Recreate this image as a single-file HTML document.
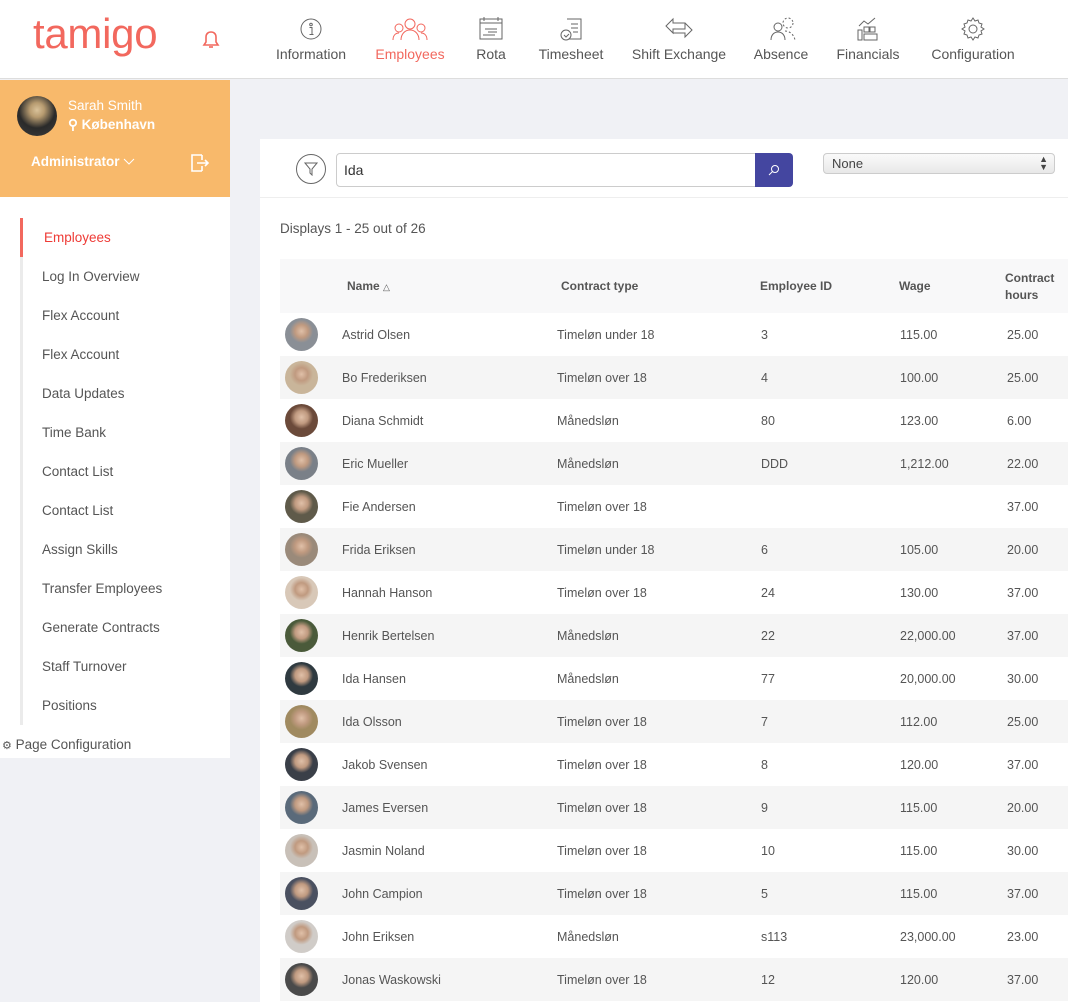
<!DOCTYPE html>
<html><head><meta charset="utf-8">
<style>
*{margin:0;padding:0;box-sizing:border-box}
body{width:1068px;height:1002px;overflow:hidden;background:#f0f1f5;font-family:"Liberation Sans",sans-serif;color:#555;position:relative}
.top{position:absolute;left:0;top:0;width:1068px;height:79px;background:#fff;border-bottom:1px solid #ddd}
.logo{position:absolute;left:33px;top:10px;font-size:42px;color:#f2685e;letter-spacing:-0.3px;font-weight:normal}
.nav{position:absolute;top:0;height:79px;text-align:center;font-size:14px;color:#555}
.nav svg{position:absolute;top:17px;left:50%;margin-left:-12px}
.nav span{position:absolute;top:46px;left:50%;transform:translateX(-50%);white-space:nowrap}
.side{position:absolute;left:0;top:80px;width:230px;height:678px;background:#fff}
.prof{position:absolute;left:0;top:0;width:230px;height:117px;background:#f8b96b;color:#fff}
.sitem{position:absolute;left:42px;font-size:13.5px;color:#555}
.panel{position:absolute;left:260px;top:139px;width:808px;height:863px;background:#fff}
.row{position:absolute;left:20px;width:788px;height:43px;font-size:12.5px;color:#555}
.row div{position:absolute;top:15px;white-space:nowrap}
.av{position:absolute;left:5px;top:5px;width:33px;height:33px;border-radius:50%}
.hd{position:absolute;font-size:12px;font-weight:bold;color:#555}
</style></head><body>
<div class="top">
 <div class="logo">tamigo</div>
 <svg style="position:absolute;left:202px;top:30px" width="18" height="20" viewBox="0 0 18 20"><path d="M9 2c-3 0-5 2-5 5v5l-2 3h14l-2-3V7c0-3-2-5-5-5z" fill="none" stroke="#f2685e" stroke-width="1.6"/><path d="M7 17h4" stroke="#f2685e" stroke-width="1.6"/></svg>
 <div class="nav" style="left:271px;width:80px"><svg width="24" height="24" viewBox="0 0 24 24"><circle cx="12" cy="12" r="10" fill="none" stroke="#666"/><circle cx="12" cy="7.5" r="1.3" fill="none" stroke="#666"/><path d="M10.5 10.5h2.5v7M10.5 17.5h4" fill="none" stroke="#666"/></svg><span>Information</span></div>
 <div class="nav" style="left:370px;width:80px;color:#f2685e"><svg width="36" height="24" viewBox="0 0 36 24" style="margin-left:-18px"><circle cx="18" cy="7" r="5" fill="none" stroke="#f2685e"/><circle cx="7" cy="11" r="4" fill="none" stroke="#f2685e"/><circle cx="29" cy="11" r="4" fill="none" stroke="#f2685e"/><path d="M9 23c0-6 4-10 9-10s9 4 9 10M1 23c0-4 2-7 6-7M35 23c0-4-2-7-6-7" fill="none" stroke="#f2685e"/></svg><span>Employees</span></div>
 <div class="nav" style="left:461px;width:60px"><svg width="24" height="24" viewBox="0 0 24 24"><rect x="1" y="2" width="22" height="20" fill="none" stroke="#666"/><path d="M1 6h22M5 0v4M19 0v4M6 12h12M9 15h9M4 18h12" stroke="#666"/></svg><span>Rota</span></div>
 <div class="nav" style="left:531px;width:80px"><svg width="24" height="24" viewBox="0 0 24 24"><path d="M8 2h14v20H10" fill="none" stroke="#666"/><path d="M12 7h7M12 11h7M14 15h5" stroke="#666"/><circle cx="7" cy="18" r="5" fill="#fff" stroke="#666"/><path d="M5 18l2 2 3-3" fill="none" stroke="#666"/></svg><span>Timesheet</span></div>
 <div class="nav" style="left:624px;width:110px"><svg width="28" height="22" viewBox="0 0 28 22" style="margin-left:-14px"><path d="M8 2L1 9l7 7v-4h12V6H8zM20 6l7 7-7 7v-4H8" fill="none" stroke="#666"/></svg><span>Shift Exchange</span></div>
 <div class="nav" style="left:746px;width:70px"><svg width="28" height="24" viewBox="0 0 28 24"><circle cx="9" cy="10" r="4" fill="none" stroke="#666"/><path d="M2 23c0-5 3-8 7-8s7 3 7 8" fill="none" stroke="#666"/><circle cx="19" cy="6" r="5" fill="none" stroke="#666" stroke-dasharray="2 2"/><path d="M16 14c5 0 9 4 10 9" fill="none" stroke="#666" stroke-dasharray="2 2"/></svg><span>Absence</span></div>
 <div class="nav" style="left:830px;width:76px"><svg width="24" height="24" viewBox="0 0 24 24"><path d="M3 9l5-5 4 3 7-6" fill="none" stroke="#666"/><rect x="2" y="13" width="4" height="10" fill="none" stroke="#666"/><rect x="8" y="10" width="5" height="5" fill="none" stroke="#666"/><rect x="14" y="10" width="5" height="5" fill="none" stroke="#666"/><rect x="8" y="17" width="13" height="6" fill="none" stroke="#666"/></svg><span>Financials</span></div>
 <div class="nav" style="left:923px;width:100px"><svg width="24" height="24" viewBox="0 0 24 24"><path d="M12 1l2 3 3-1 1 3 3 1-1 3 3 2-3 2 1 3-3 1-1 3-3-1-2 3-2-3-3 1-1-3-3-1 1-3-3-2 3-2-1-3 3-1 1-3 3 1z" fill="none" stroke="#666"/><circle cx="12" cy="12" r="4" fill="none" stroke="#666"/></svg><span>Configuration</span></div>
</div>

<div class="side">
 <div class="prof">
  <div style="position:absolute;left:17px;top:16px;width:40px;height:40px;border-radius:50%;background:radial-gradient(circle at 50% 35%,#d9c29a 0,#b79b70 22%,#2a2a2a 55%,#3c3c3c 100%)"></div>
  <div style="position:absolute;left:68px;top:18px;font-size:13.5px">Sarah Smith</div>
  <div style="position:absolute;left:68px;top:37px;font-size:13.5px;font-weight:bold">⚲ København</div>
  <div style="position:absolute;left:31px;top:74px;font-size:13.5px;font-weight:bold">Administrator <svg width="12" height="8" viewBox="0 0 12 8"><path d="M1 1l5 5 5-5" fill="none" stroke="#fff"/></svg></div>
  <svg style="position:absolute;left:190px;top:73px" width="20" height="20" viewBox="0 0 20 20"><path d="M12 2H2v16h10M12 13v5M12 2v5" fill="none" stroke="#fff" stroke-width="1.6"/><path d="M7 10h11M15 7l3 3-3 3" fill="none" stroke="#fff" stroke-width="1.6"/></svg>
 </div>
 <div style="position:absolute;left:20px;top:138px;width:3px;height:507px;background:#ebebeb"></div>
 <div style="position:absolute;left:20px;top:138px;width:3px;height:39px;background:#f2685e"></div>
 <div class="sitem" style="top:150px;left:44px;color:#ee3b36">Employees</div>
 <div class="sitem" style="top:189px">Log In Overview</div>
 <div class="sitem" style="top:228px">Flex Account</div>
 <div class="sitem" style="top:267px">Flex Account</div>
 <div class="sitem" style="top:306px">Data Updates</div>
 <div class="sitem" style="top:345px">Time Bank</div>
 <div class="sitem" style="top:384px">Contact List</div>
 <div class="sitem" style="top:423px">Contact List</div>
 <div class="sitem" style="top:462px">Assign Skills</div>
 <div class="sitem" style="top:501px">Transfer Employees</div>
 <div class="sitem" style="top:540px">Generate Contracts</div>
 <div class="sitem" style="top:579px">Staff Turnover</div>
 <div class="sitem" style="top:618px">Positions</div>
 <div class="sitem" style="top:657px;left:2px"><span style="font-size:11px">⚙</span> Page Configuration</div>
</div>

<div class="panel">
 <div style="position:absolute;left:36px;top:15px;width:30px;height:30px;border:1px solid #666;border-radius:50%"><svg style="position:absolute;left:7px;top:7px" width="14" height="14" viewBox="0 0 14 14"><path d="M1 1h12L8 7v6L6 11V7z" fill="none" stroke="#666"/></svg></div>
 <div style="position:absolute;left:76px;top:14px;width:420px;height:34px;border:1px solid #ccc;border-radius:4px 0 0 4px;font-size:14px;color:#333;padding:8px 7px">Ida</div>
 <div style="position:absolute;left:495px;top:14px;width:38px;height:34px;background:#4446a0;border-radius:0 4px 4px 0"><svg style="position:absolute;left:13px;top:11px" width="12" height="12" viewBox="0 0 12 12"><circle cx="7" cy="5" r="3.5" fill="none" stroke="#fff"/><path d="M4.5 7.5L1 11" stroke="#fff"/></svg></div>
 <div style="position:absolute;left:563px;top:14px;width:232px;height:21px;border:1px solid #ccc;border-radius:4px;background:linear-gradient(#fafafa,#e8e8e8);font-size:13px;color:#444;padding:2px 8px">None<span style="position:absolute;right:6px;top:1px;font-size:9px;line-height:8px">▲<br>▼</span></div>
 <div style="position:absolute;left:0;top:58px;width:808px;height:1px;background:#eee"></div>
 <div style="position:absolute;left:20px;top:82px;font-size:13.5px;color:#555">Displays 1 - 25 out of 26</div>
 <div style="position:absolute;left:20px;top:120px;width:788px;height:54px;background:#f8f8f9"></div>
 <div class="hd" style="left:87px;top:140px">Name <span style="font-weight:normal;font-size:9px">△</span></div>
 <div class="hd" style="left:301px;top:140px">Contract type</div>
 <div class="hd" style="left:500px;top:140px">Employee ID</div>
 <div class="hd" style="left:639px;top:140px">Wage</div>
 <div class="hd" style="left:745px;top:131px;line-height:17px">Contract<br>hours</div>
 <div id="rows"></div>
</div>
<script>
var d=[["Astrid Olsen","Timeløn under 18","3","115.00","25.00"],["Bo Frederiksen","Timeløn over 18","4","100.00","25.00"],["Diana Schmidt","Månedsløn","80","123.00","6.00"],["Eric Mueller","Månedsløn","DDD","1,212.00","22.00"],["Fie Andersen","Timeløn over 18","","","37.00"],["Frida Eriksen","Timeløn under 18","6","105.00","20.00"],["Hannah Hanson","Timeløn over 18","24","130.00","37.00"],["Henrik Bertelsen","Månedsløn","22","22,000.00","37.00"],["Ida Hansen","Månedsløn","77","20,000.00","30.00"],["Ida Olsson","Timeløn over 18","7","112.00","25.00"],["Jakob Svensen","Timeløn over 18","8","120.00","37.00"],["James Eversen","Timeløn over 18","9","115.00","20.00"],["Jasmin Noland","Timeløn over 18","10","115.00","30.00"],["John Campion","Timeløn over 18","5","115.00","37.00"],["John Eriksen","Månedsløn","s113","23,000.00","23.00"],["Jonas Waskowski","Timeløn over 18","12","120.00","37.00"]];
var cols=["#8a8f96","#c9b59a","#6b4a3a","#7a8088","#5f5a4a","#9a8a7a","#d8c8b8","#4a5a3a","#2f3a40","#a08a60","#3a3f48","#5a6a7a","#c8c0b8","#4a5060","#d0ccc8","#4a4a4a"];
var h="";d.forEach(function(r,i){h+='<div class="row" style="top:'+(174+i*43)+'px;background:'+(i%2?'#f5f5f5':'#fff')+'"><span class="av" style="background:radial-gradient(circle at 50% 40%,#e0c0a8 0,#c09a80 25%,'+cols[i]+' 45%,'+cols[i]+' 100%)"></span><div style="left:62px">'+r[0]+'</div><div style="left:277px">'+r[1]+'</div><div style="left:481px">'+r[2]+'</div><div style="left:620px">'+r[3]+'</div><div style="left:727px">'+r[4]+'</div></div>'});
document.getElementById("rows").innerHTML=h;
</script>
</body></html>
